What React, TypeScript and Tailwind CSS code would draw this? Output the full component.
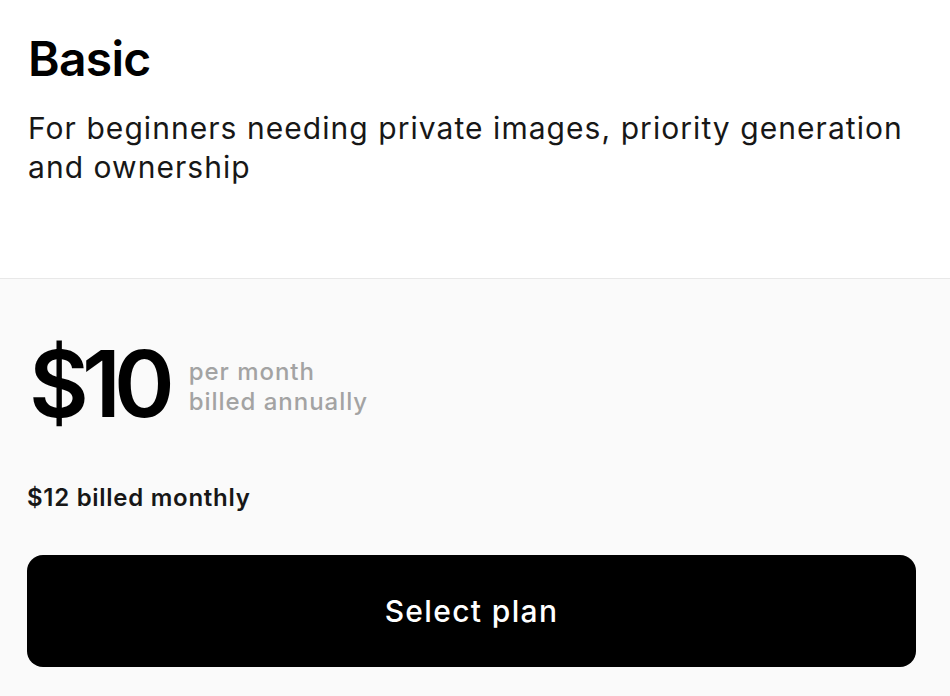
export default function App() {
  return (
    <div className="w-[950px] h-[696px] overflow-hidden bg-white text-black font-['Inter',sans-serif] antialiased">
      <div className="px-[28px] pt-[35px] pb-[91px] border-b border-[#e8e8e8]">
        <h2 className="text-[48px] leading-[48px] font-semibold tracking-[-0.015em]">Basic</h2>
        <p className="mt-[26px] text-[30px] leading-[39px] tracking-[0.035em] text-[#171717] max-w-[900px]">
          For beginners needing private images, priority generation and ownership
        </p>
      </div>

      <div className="bg-[#fafafa] px-[27px] pt-[59px] pb-[40px]">
        <div className="flex items-center gap-[21px]">
          <span className="pl-[2px] text-[92px] leading-[92px] font-semibold tracking-[-0.075em]">$10</span>
          <div className="mt-[6px] flex flex-col text-[24px] leading-[30px] font-medium tracking-[0.04em] text-[#a3a3a3]">
            <span>per month</span>
            <span>billed annually</span>
          </div>
        </div>

        <p className="mt-[53px] text-[24px] leading-[30px] font-semibold tracking-[0.03em] text-[#171717]">$12 billed monthly</p>

        <button className="mt-[42px] w-[889px] h-[112px] rounded-[16px] bg-black text-white text-[30px] font-medium tracking-[0.045em] flex items-center justify-center">
          Select plan
        </button>
      </div>
    </div>
  )
}
